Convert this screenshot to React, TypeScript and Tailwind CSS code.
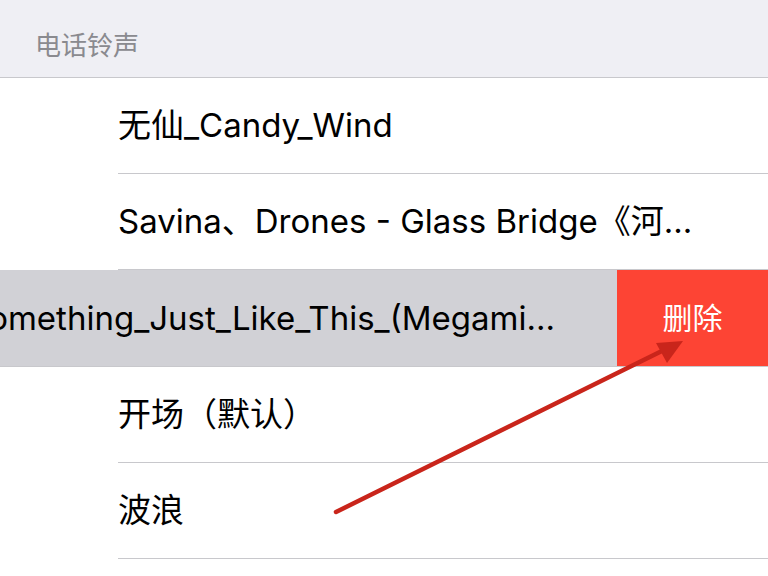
const font = { fontFamily: "Inter, 'Noto Sans CJK SC', sans-serif" };

function Row({ label }: { label: string }) {
  return (
    <div className="bg-white">
      <div className="h-[95px] flex items-center pl-[118px] text-[33px] text-black leading-none whitespace-nowrap">
        {label}
      </div>
      <div className="ml-[118px] h-px bg-[#c8c8cc]" />
    </div>
  );
}

export default function App() {
  return (
    <div className="relative w-[768px] h-[576px] overflow-hidden bg-white" style={font}>
      {/* section header */}
      <div className="h-[78px] bg-[#efeff4] border-b border-[#c8c8cc] flex items-end pl-[35px] pb-[18px]">
        <span className="text-[26px] text-[#8a8a8f] leading-none">电话铃声</span>
      </div>

      <Row label="无仙_Candy_Wind" />
      <Row label="Savina、Drones - Glass Bridge《河…" />

      {/* swiped row */}
      <div className="flex h-[97px] overflow-hidden border-b border-[#c8c8cc]">
        <div className="w-[768px] shrink-0 -ml-[151px] bg-[#d1d1d6] flex items-center pl-[118px] text-[33px] text-black leading-none whitespace-nowrap">
          Something_Just_Like_This_(Megami…
        </div>
        <div className="w-[151px] shrink-0 bg-[#fd4434] flex items-center justify-center text-white text-[30px] leading-none">
          删除
        </div>
      </div>

      <Row label="开场（默认）" />
      <Row label="波浪" />

      {/* annotation arrow */}
      <svg className="absolute inset-0 pointer-events-none" width="768" height="576">
        <line x1="336" y1="512" x2="672" y2="346" stroke="#c9251b" strokeWidth="4.5" strokeLinecap="round" />
        <polygon points="683,341 656,343 667,363" fill="#c9251b" />
      </svg>
    </div>
  );
}
